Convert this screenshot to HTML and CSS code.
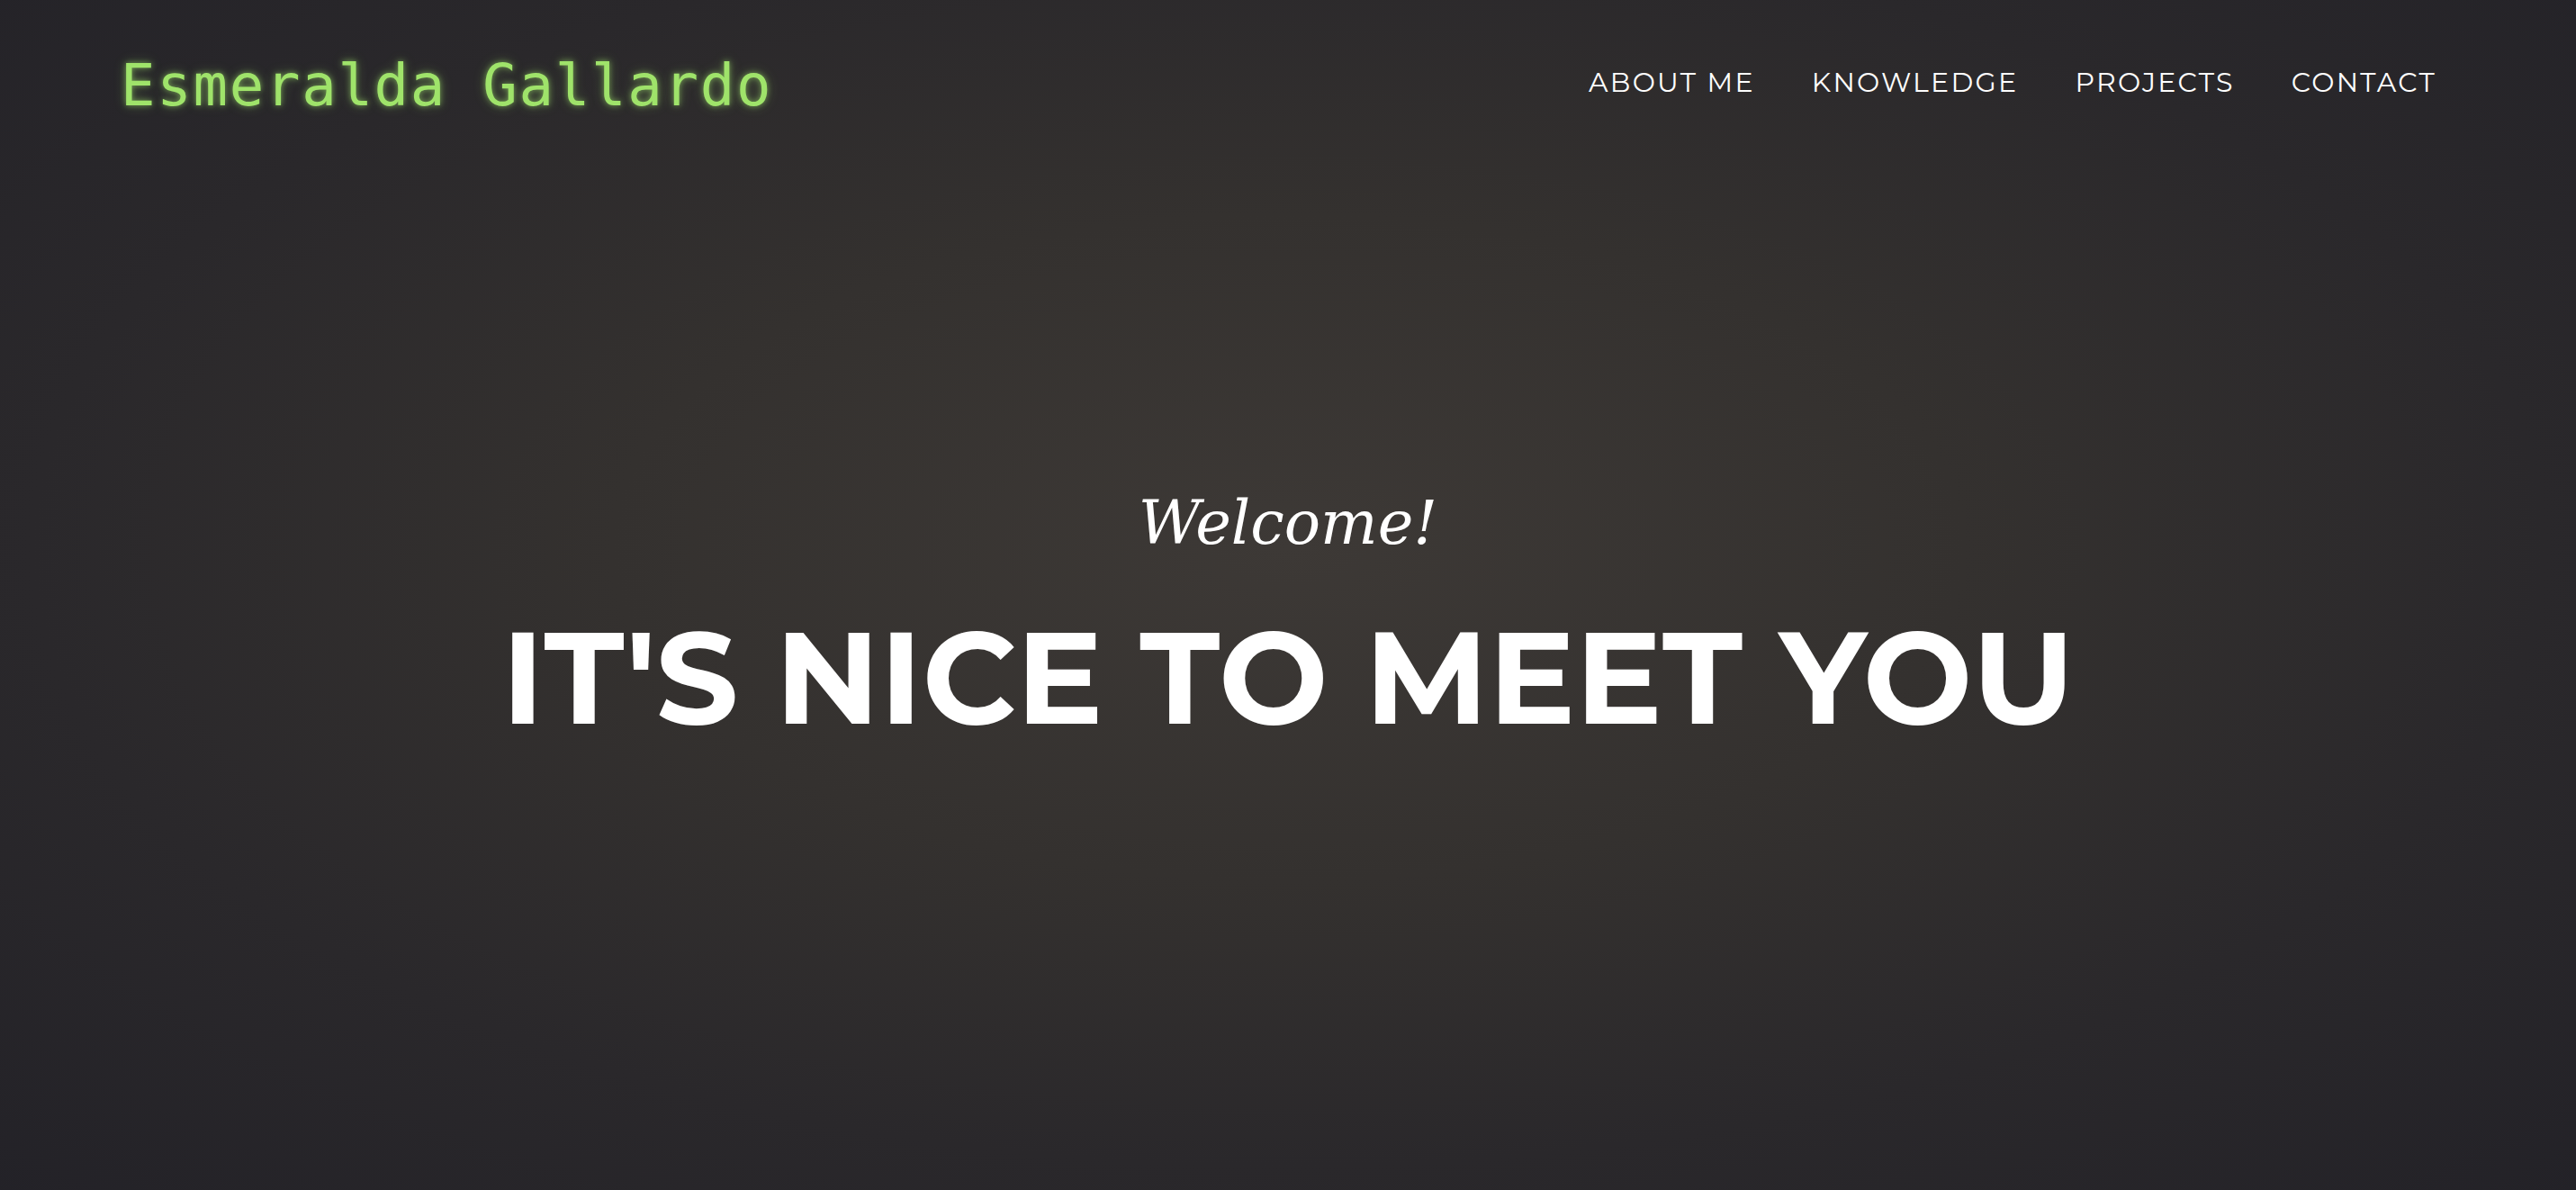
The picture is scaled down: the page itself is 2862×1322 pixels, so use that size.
FILE: index.html
```html
<!DOCTYPE html>
<html lang="en">
<head>
<meta charset="utf-8">
<title>Esmeralda Gallardo</title>
<link rel="stylesheet" href="styles.css">
</head>
<body>
<div class="page">
  <header class="navbar">
    <a class="brand" href="#">Esmeralda Gallardo</a>
    <nav class="nav">
      <a href="#about">About me</a>
      <a href="#knowledge">Knowledge</a>
      <a href="#projects">Projects</a>
      <a href="#contact">Contact</a>
    </nav>
  </header>
  <section class="hero">
    <div class="lead-in">Welcome!</div>
    <h1 class="heading">It's nice to meet you</h1>
  </section>
</div>
</body>
</html>
```
FILE: styles.css
```css
html, body {
  margin: 0;
  padding: 0;
  height: 100%;
}
body {
  background: #222127;
  overflow: hidden;
}
.page {
  min-height: 1322px;
  background: radial-gradient(ellipse 75% 80% at 50% 46%, #3d3936 0%, #34312f 35%, #2a282b 65%, #222127 100%);
  color: #fff;
}
.navbar {
  height: 190px;
  display: flex;
  align-items: center;
  justify-content: space-between;
  padding: 0 155px 0 134px;
}
.brand {
  font-family: "DejaVu Sans Mono", monospace;
  font-size: 64px;
  line-height: 1;
  letter-spacing: 1.7px;
  color: #9fe36a;
  text-decoration: none;
  text-shadow: 0 0 6px rgba(159, 227, 106, 0.6), 0 0 14px rgba(159, 227, 106, 0.3);
}
.nav {
  display: flex;
  gap: 63px;
  padding-bottom: 7px;
}
.nav a {
  font-family: "Montserrat", "Open Sans", sans-serif;
  font-size: 30px;
  line-height: 1;
  letter-spacing: 2.3px;
  text-transform: uppercase;
  color: #fff;
  text-decoration: none;
}
.hero {
  padding-top: 358px;
  text-align: center;
}
.lead-in {
  font-family: "Droid Serif", "DejaVu Serif", serif;
  font-style: italic;
  font-size: 67px;
  line-height: 1;
}
.heading {
  margin: 66px 0 0;
  font-family: "Montserrat", "Open Sans", sans-serif;
  font-weight: 700;
  font-size: 144px;
  line-height: 1;
  letter-spacing: 0;
  text-transform: uppercase;
}
```
